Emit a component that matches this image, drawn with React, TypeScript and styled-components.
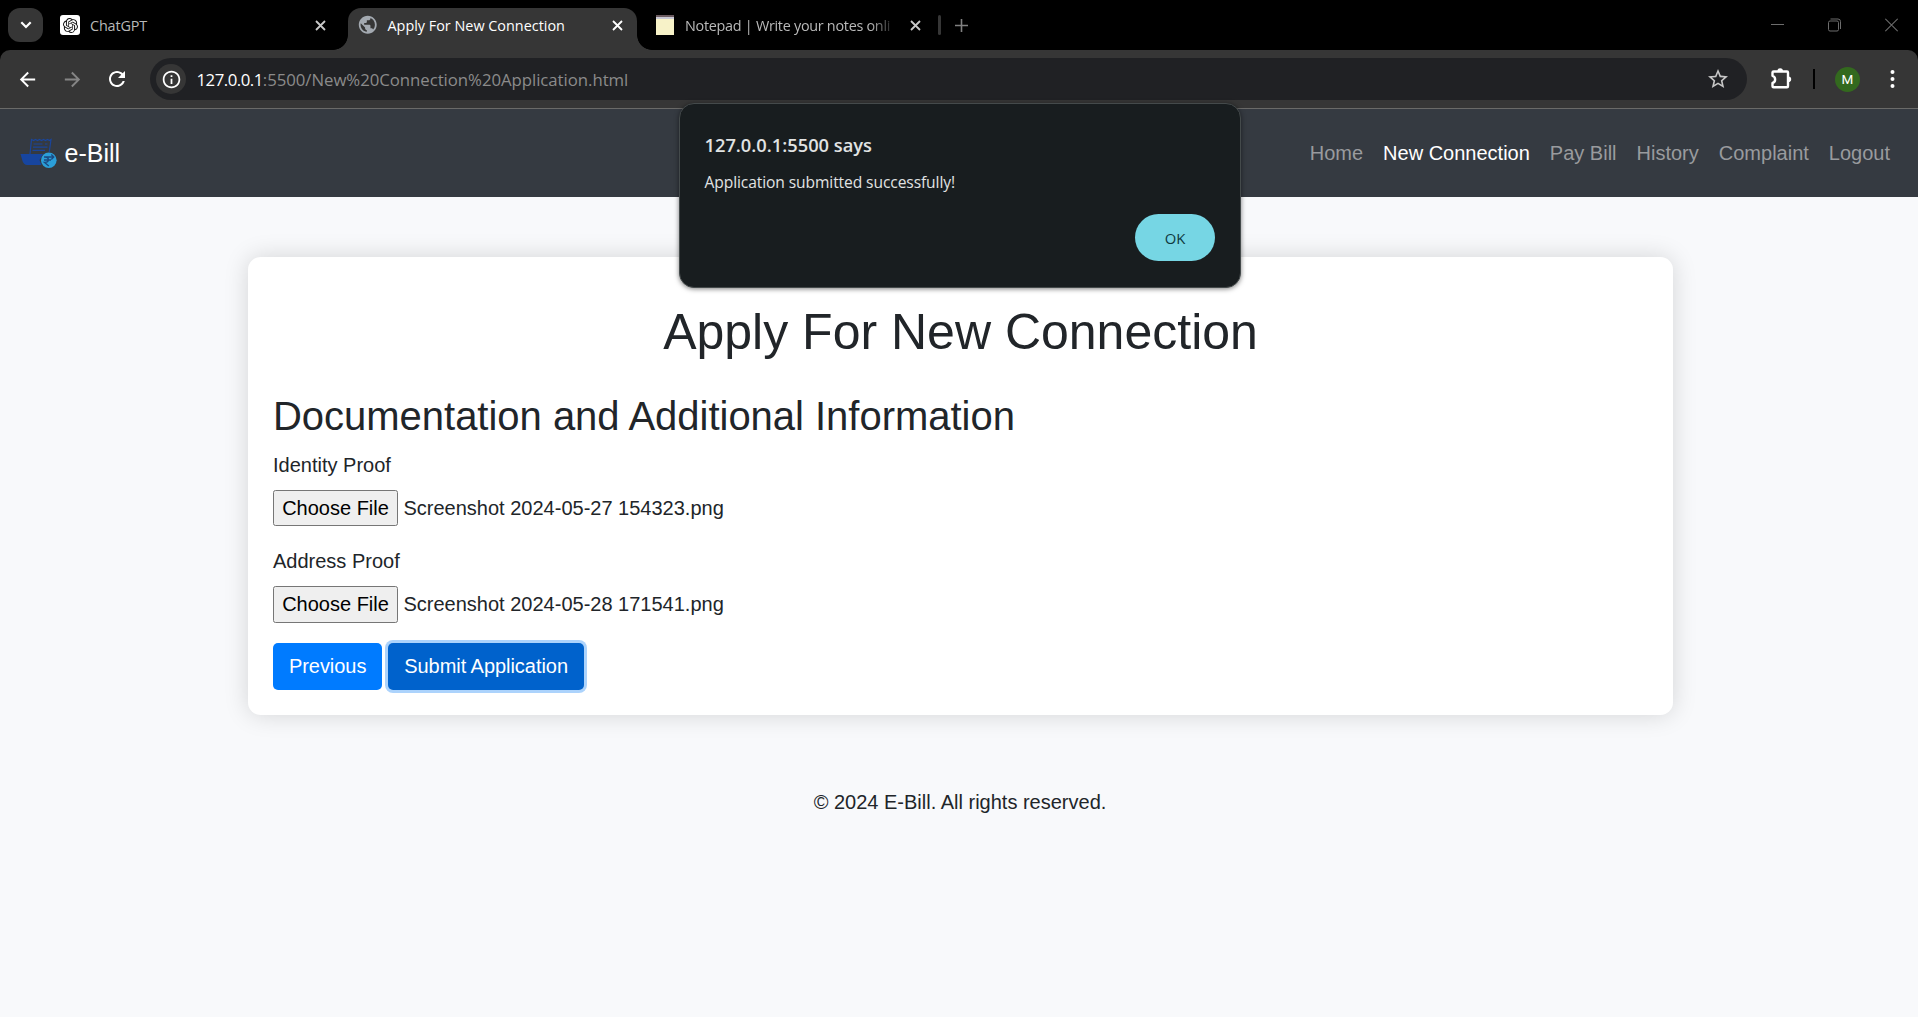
import React from "react";
import styled, { createGlobalStyle, css } from "styled-components";

const GlobalStyle = createGlobalStyle`
  *, *::before, *::after { box-sizing: border-box; }
  html, body { margin: 0; padding: 0; overflow: hidden; }
  body { background: #f8f9fb; color: #212529; }
`;

const uiFont = css`font-family: "Open Sans", "Noto Sans", sans-serif;`;
const pageFont = css`font-family: "Liberation Sans", Arial, sans-serif;`;

/* ---------- Browser frame ---------- */

const Browser = styled.div`
  position: relative;
  display: flex;
  flex-direction: column;
  width: 1918px;
  height: 1017px;
  overflow: hidden;
`;

const Chrome = styled.div`
  background: #000;
  ${uiFont}
`;

const TabStrip = styled.div`
  display: flex;
  align-items: flex-start;
  height: 50px;
  padding: 8px 20px 0 8px;
`;

const TabSearch = styled.div`
  display: flex;
  align-items: center;
  justify-content: center;
  width: 35px;
  height: 34px;
  border-radius: 12px;
  background: #363636;
`;

const Tab = styled.div<{ $width: number; $active?: boolean; $lead: number; $end: number }>`
  position: relative;
  display: flex;
  align-items: center;
  width: ${(p) => p.$width}px;
  height: ${(p) => (p.$active ? 42 : 34)}px;
  padding: 0 ${(p) => p.$end}px ${(p) => (p.$active ? 8 : 0)}px ${(p) => p.$lead}px;
  border-radius: 13px 13px 0 0;
  background: ${(p) => (p.$active ? "#363636" : "transparent")};
  color: ${(p) => (p.$active ? "#fff" : "#b9b9b9")};
  ${(p) =>
    p.$active &&
    css`
      &::before,
      &::after {
        content: "";
        position: absolute;
        bottom: 0;
        width: 15px;
        height: 15px;
      }
      &::before {
        right: 100%;
        background: radial-gradient(circle at 0 0, transparent 14.5px, #363636 15.2px);
      }
      &::after {
        left: 100%;
        background: radial-gradient(circle at 100% 0, transparent 14.5px, #363636 15.2px);
      }
    `}
`;

const TabTitle = styled.span<{ $tracking?: string; $fade?: boolean; $gap: number }>`
  flex: 1;
  min-width: 0;
  margin-left: ${(p) => p.$gap}px;
  padding-top: 1px;
  white-space: nowrap;
  font-size: 14.4px;
  line-height: 22px;
  letter-spacing: ${(p) => p.$tracking ?? "0"};
  ${(p) =>
    p.$fade &&
    css`
      margin-right: 12px;
      mask-image: linear-gradient(to right, #000 185px, transparent 212px);
    `}
`;

const GptBadge = styled.div`
  display: flex;
  align-items: center;
  justify-content: center;
  width: 20px;
  height: 20px;
  border-radius: 3px;
  background: #fff;
  color: #111;
`;

const NotepadIcon = styled.div`
  width: 18px;
  height: 20px;
  background: linear-gradient(#6b5b60 0 2px, #c8c8d4 2px 4px, #f7f2c8 4px);
`;

const StripDivider = styled.div`
  width: 3px;
  height: 20px;
  margin: 7px 14px 0 17px;
  border-radius: 2px;
  background: #363636;
`;

const PlusSlot = styled.div`
  display: flex;
  height: 34px;
  align-items: center;
`;

const WindowControls = styled.div`
  display: flex;
  align-items: center;
  gap: 44px;
  height: 34px;
  margin-left: auto;
  color: #6d6d6d;
`;

const Toolbar = styled.div`
  display: flex;
  align-items: center;
  height: 59px;
  padding: 0 23px 0 16px;
  border-bottom: 1px solid #6a6a68;
  border-radius: 10px 10px 0 0;
  background: #363636;
  color: #fff;
`;

const NavButtons = styled.div`
  display: flex;
  align-items: center;
  gap: 21.5px;
  width: 134px;
`;

const AddressBar = styled.div`
  display: flex;
  align-items: center;
  width: 1597px;
  height: 42px;
  padding: 0 17px 0 6px;
  border-radius: 21px;
  background: #202124;
`;

const InfoCircle = styled.div`
  display: flex;
  align-items: center;
  justify-content: center;
  width: 30px;
  height: 30px;
  margin-right: 10.5px;
  border-radius: 50%;
  background: #363636;
`;

const Host = styled.span`
  font-size: 16.8px;
  letter-spacing: -0.5px;
  color: #fff;
`;

const Path = styled.span`
  flex: 1;
  font-size: 16.8px;
  letter-spacing: -0.05px;
  color: #8b8b8b;
`;

const ToolbarDivider = styled.div`
  width: 2px;
  height: 20px;
  margin: 0 20px 0 20px;
  background: #000;
`;

const Avatar = styled.div`
  display: flex;
  align-items: center;
  justify-content: center;
  width: 25px;
  height: 25px;
  margin-right: auto;
  border-radius: 50%;
  background: #33691e;
  font-family: Roboto, sans-serif;
  font-size: 13.5px;
`;

const ExtensionSlot = styled.div`
  display: flex;
  margin: 0 0 2px 23px;
`;

/* ---------- Alert dialog ---------- */

const Dialog = styled.div`
  position: absolute;
  z-index: 2;
  top: 103px;
  left: 679px;
  display: flex;
  flex-direction: column;
  width: 562px;
  height: 185px;
  padding: 28px 25px 26px 24.5px;
  border: 1px solid #444a4b;
  border-radius: 15px;
  background: #181d1f;
  box-shadow: 0 1px 5px rgba(0, 0, 0, 0.5);
  color: #e1e3e3;
  ${uiFont}
`;

const DialogTitle = styled.div`
  font-size: 18.3px;
  font-weight: 600;
  line-height: 26px;
`;

const DialogMessage = styled.div`
  margin-top: 13px;
  font-size: 15.6px;
  line-height: 22px;
  letter-spacing: -0.1px;
`;

const OkButton = styled.button`
  align-self: flex-end;
  width: 80px;
  height: 47px;
  margin-top: auto;
  padding: 1px 0 0;
  border: 0;
  border-radius: 24px;
  background: #76d6e4;
  color: #0f3a40;
  font-size: 14.8px;
  font-weight: 500;
  ${uiFont}
`;

/* ---------- Web page ---------- */

const Page = styled.div`
  flex: 1;
  background: #f8f9fb;
  font-size: 20px;
  line-height: 30px;
  ${pageFont}
`;

const Navbar = styled.nav`
  display: flex;
  align-items: center;
  justify-content: space-between;
  height: 88px;
  padding: 0 28px 0 19px;
  background: #353a41;
`;

const Brand = styled.div`
  display: flex;
  align-items: center;
  gap: 7.5px;
  color: #fff;
  font-size: 25px;
`;

const NavLinks = styled.div`
  display: flex;
  gap: 20px;
`;

const NavLink = styled.span<{ $active?: boolean }>`
  color: ${(p) => (p.$active ? "#fff" : "#999b9e")};
`;

const Card = styled.main`
  width: 1425px;
  height: 458px;
  margin: 60px 0 0 248px;
  padding: 45px 25px 25px;
  border-radius: 12.5px;
  background: #fff;
  box-shadow: 0 0 25px rgba(0, 0, 0, 0.15);
`;

const Title = styled.h1`
  margin: 0 0 30px;
  text-align: center;
  font-size: 50px;
  font-weight: 400;
  line-height: 60px;
`;

const Subtitle = styled.h2`
  margin: 0 0 10px;
  font-size: 40px;
  font-weight: 400;
  line-height: 48px;
  letter-spacing: -0.02px;
`;

const FormGroup = styled.div`
  display: flex;
  flex-direction: column;
  gap: 10px;
  margin-bottom: 20.2px;
`;

const FileRow = styled.div`
  display: flex;
  align-items: center;
  gap: 5.5px;
  height: 36.2px;
`;

const ChooseFile = styled.button`
  width: 125px;
  height: 100%;
  padding: 0;
  border: 1px solid #767676;
  border-radius: 2.5px;
  background: #efefef;
  color: #000;
  font-size: 20px;
  ${pageFont}
`;

const Actions = styled.div`
  display: flex;
  gap: 6px;
`;

const Button = styled.button<{ $focused?: boolean }>`
  height: 47px;
  padding: 0 15.9px;
  border: 0;
  border-radius: 5px;
  background: ${(p) => (p.$focused ? "#0062cc" : "#007bff")};
  box-shadow: ${(p) => (p.$focused ? "0 0 0 3px #acd3fc" : "none")};
  color: #fff;
  font-size: 20px;
  letter-spacing: -0.04px;
  ${pageFont}
`;

const Footer = styled.footer`
  margin-top: 72px;
  padding-left: 2px;
  text-align: center;
`;

/* ---------- Icons ---------- */

const Glyph = ({ d, size = 24, color = "currentColor" }: { d: string; size?: number; color?: string }) => (
  <svg width={size} height={size} viewBox="0 0 24 24" fill={color}>
    <path d={d} />
  </svg>
);

const paths = {
  back: "M20 11H7.83l5.59-5.59L12 4l-8 8 8 8 1.41-1.41L7.83 13H20v-2z",
  forward: "M12 4l-1.41 1.41L16.17 11H4v2h12.17l-5.58 5.59L12 20l8-8z",
  reload:
    "M17.65 6.35C16.2 4.9 14.21 4 12 4c-4.42 0-7.99 3.58-7.99 8s3.57 8 7.99 8c3.73 0 6.84-2.55 7.73-6h-2.08c-.82 2.33-3.04 4-5.65 4-3.31 0-6-2.69-6-6s2.69-6 6-6c1.66 0 3.14.69 4.22 1.78L13 11h7V4l-2.35 2.35z",
  info: "M11 7h2v2h-2zm0 4h2v6h-2zm1-9C6.48 2 2 6.48 2 12s4.48 10 10 10 10-4.48 10-10S17.52 2 12 2zm0 18c-4.41 0-8-3.59-8-8s3.59-8 8-8 8 3.59 8 8-3.59 8-8 8z",
  star: "M22 9.24l-7.19-.62L12 2 9.19 8.63 2 9.24l5.46 4.73L5.82 21 12 17.27 18.18 21l-1.63-7.03L22 9.24zM12 15.4l-3.76 2.27 1-4.28-3.32-2.88 4.38-.38L12 6.1l1.71 4.04 4.38.38-3.32 2.88 1 4.28L12 15.4z",
  openai:
    "M22.2819 9.8211a5.9847 5.9847 0 0 0-.5157-4.9108 6.0462 6.0462 0 0 0-6.5098-2.9A6.0651 6.0651 0 0 0 4.9807 4.1818a5.9847 5.9847 0 0 0-3.9977 2.9 6.0462 6.0462 0 0 0 .7427 7.0966 5.98 5.98 0 0 0 .511 4.9107 6.051 6.051 0 0 0 6.5146 2.9001A5.9847 5.9847 0 0 0 13.2599 24a6.0557 6.0557 0 0 0 5.7718-4.2058 5.9894 5.9894 0 0 0 3.9977-2.9001 6.0557 6.0557 0 0 0-.7475-7.0729zm-9.022 12.6081a4.4755 4.4755 0 0 1-2.8764-1.0408l.1419-.0804 4.7783-2.7582a.7948.7948 0 0 0 .3927-.6813v-6.7369l2.02 1.1686a.071.071 0 0 1 .038.052v5.5826a4.504 4.504 0 0 1-4.4945 4.4944zm-9.6607-4.1254a4.4708 4.4708 0 0 1-.5346-3.0137l.142.0852 4.783 2.7582a.7712.7712 0 0 0 .7806 0l5.8428-3.3685v2.3324a.0804.0804 0 0 1-.0332.0615L9.74 19.9502a4.4992 4.4992 0 0 1-6.1408-1.6464zM2.3408 7.8956a4.485 4.485 0 0 1 2.3655-1.9728V11.6a.7664.7664 0 0 0 .3879.6765l5.8144 3.3543-2.0201 1.1685a.0757.0757 0 0 1-.071 0l-4.8303-2.7865A4.504 4.504 0 0 1 2.3408 7.872zm16.5963 3.8558L13.1038 8.364 15.1192 7.2a.0757.0757 0 0 1 .071 0l4.8303 2.7913a4.4944 4.4944 0 0 1-.6765 8.1042v-5.6772a.79.79 0 0 0-.407-.667zm2.0107-3.0231l-.142-.0852-4.7735-2.7818a.7759.7759 0 0 0-.7854 0L9.409 9.2297V6.8974a.0662.0662 0 0 1 .0284-.0615l4.8303-2.7866a4.4992 4.4992 0 0 1 6.6802 4.66zM8.3065 12.863l-2.02-1.1638a.0804.0804 0 0 1-.038-.0567V6.0742a4.4992 4.4992 0 0 1 7.3757-3.4537l-.142.0805L8.704 5.459a.7948.7948 0 0 0-.3927.6813zm1.0976-2.3654l2.602-1.4998 2.6069 1.4998v2.9994l-2.5974 1.4997-2.6067-1.4997Z",
  globe:
    "M12 2C6.48 2 2 6.48 2 12s4.48 10 10 10 10-4.48 10-10S17.52 2 12 2zm-1 17.93c-3.95-.49-7-3.85-7-7.93 0-.62.08-1.21.21-1.79L9 15v1c0 1.1.9 2 2 2v1.93zm6.9-2.54c-.26-.81-1-1.39-1.9-1.39h-1v-3c0-.55-.45-1-1-1H8v-2h2c.55 0 1-.45 1-1V7h2c1.1 0 2-.9 2-2v-.41c2.93 1.19 5 4.06 5 7.41 0 2.08-.8 3.97-2.1 5.39z",
};

const CloseIcon = ({ color }: { color: string }) => (
  <svg width="11" height="11" viewBox="0 0 11 11" stroke={color} strokeWidth="1.8">
    <path d="M1 1l9 9M10 1l-9 9" />
  </svg>
);

const PuzzleIcon = () => (
  <svg width="23" height="23" viewBox="0 0 23 23">
    <path
      d="M2.5 5.6q0-1.1 1.1-1.1H17q1 0 1 1V19.300q0 1-1 1H3.600q-1.100 0-1.100-1V16C6 15 6 9.800 2.500 8.800z"
      fill="none"
      stroke="#fff"
      strokeWidth="2.4"
      strokeLinejoin="round"
    />
    <path d="M7.400 4.200a2.800 2.900 0 0 1 5.600 0zM18.300 9.500a2.900 2.800 0 0 1 0 5.600z" fill="#fff" />
  </svg>
);

const BrandLogo = () => (
  <svg width="38" height="32" viewBox="0 0 38 32">
    <path
      d="M11 17L12.500 2.500l2 1 2-1 2 1 2-1 2 1 2-1 2 1 2-1 2 1 1.500-1-1.800 13"
      fill="none"
      stroke="#1a459b"
      strokeWidth="1.200"
    />
    <path d="M14.500 7h9M26 7h2.500M14 10.200h14.500M13.500 13.400h12.500" stroke="#1a459b" strokeWidth="1.200" />
    <path d="M1.500 17h23l-4 6 2 5H8q-3 0-4.500-4z" fill="#17459f" />
    <circle cx="29.800" cy="23.300" r="8.300" fill="#353a41" />
    <circle cx="29.800" cy="23.300" r="7.800" fill="#2b9fd9" />
    <path
      d="M25 20h10M32.300 17.500l2.500 2.500-2.500 2.500M25 23h7M26 20c4.500 0 4.500 5.300 0 5.300h-.6l4.400 3.700"
      fill="none"
      stroke="#1b4a82"
      strokeWidth="1.300"
    />
  </svg>
);

const links = ["Home", "New Connection", "Pay Bill", "History", "Complaint", "Logout"];

const documents = [
  { label: "Identity Proof", file: "Screenshot 2024-05-27 154323.png" },
  { label: "Address Proof", file: "Screenshot 2024-05-28 171541.png" },
];

export default function App() {
  return (
    <Browser>
      <GlobalStyle />
      <Chrome>
        <TabStrip>
          <TabSearch>
            <svg width="12" height="8" viewBox="0 0 12 8" fill="none" stroke="#fff" strokeWidth="2.2">
              <path d="M1.300 1.300L6 6l4.700-4.700" />
            </svg>
          </TabSearch>
          <Tab $width={305} $lead={17} $end={22.5}>
            <GptBadge>
              <Glyph d={paths.openai} size={15} />
            </GptBadge>
            <TabTitle $gap={10} $tracking="-0.15px">ChatGPT</TabTitle>
            <CloseIcon color="#c9c9c9" />
          </Tab>
          <Tab $active $width={289} $lead={9} $end={14}>
            <Glyph d={paths.globe} size={21.5} color="#a3a9b0" />
            <TabTitle $gap={9}>Apply For New Connection</TabTitle>
            <CloseIcon color="#fff" />
          </Tab>
          <Tab $width={284} $lead={19} $end={0.5}>
            <NotepadIcon />
            <TabTitle $gap={11} $tracking="-0.28px" $fade>
              Notepad | Write your notes onli
            </TabTitle>
            <CloseIcon color="#c9c9c9" />
          </Tab>
          <StripDivider />
          <PlusSlot>
            <svg width="13" height="13" viewBox="0 0 13 13" stroke="#808080" strokeWidth="1.6">
              <path d="M6.500 0v13M0 6.500h13" />
            </svg>
          </PlusSlot>
          <WindowControls>
            <svg width="13" height="14" viewBox="0 0 13 14" stroke="currentColor">
              <path d="M0 6.500h13" />
            </svg>
            <svg width="13" height="14" viewBox="0 0 13 14" fill="none" stroke="currentColor">
              <rect x="0.500" y="3" width="10" height="10" rx="1.500" />
              <path d="M2.500 1h7.500q2.500 0 2.500 2.500V11" />
            </svg>
            <svg width="13" height="14" viewBox="0 0 13 14" stroke="currentColor" strokeWidth="1.100">
              <path d="M.3.800l12.400 12.400M12.700.800L.3 13.200" />
            </svg>
          </WindowControls>
        </TabStrip>
        <Toolbar>
          <NavButtons>
            <Glyph d={paths.back} size={23} />
            <Glyph d={paths.forward} size={23} color="#858585" />
            <Glyph d={paths.reload} size={24} />
          </NavButtons>
          <AddressBar>
            <InfoCircle>
              <Glyph d={paths.info} size={21} />
            </InfoCircle>
            <Host>127.0.0.1</Host>
            <Path>:5500/New%20Connection%20Application.html</Path>
            <Glyph d={paths.star} size={24} color="#c7c7c7" />
          </AddressBar>
          <ExtensionSlot>
            <PuzzleIcon />
          </ExtensionSlot>
          <ToolbarDivider />
          <Avatar>M</Avatar>
          <svg width="5" height="20" viewBox="0 0 5 20" fill="#fff">
            <circle cx="2.500" cy="3" r="2" />
            <circle cx="2.500" cy="10" r="2" />
            <circle cx="2.500" cy="17" r="2" />
          </svg>
        </Toolbar>
      </Chrome>
      <Page>
        <Navbar>
          <Brand>
            <BrandLogo />
            <span>e-Bill</span>
          </Brand>
          <NavLinks>
            {links.map((name) => (
              <NavLink key={name} $active={name === "New Connection"}>
                {name}
              </NavLink>
            ))}
          </NavLinks>
        </Navbar>
        <Card>
          <Title>Apply For New Connection</Title>
          <Subtitle>Documentation and Additional Information</Subtitle>
          {documents.map((doc) => (
            <FormGroup key={doc.label}>
              <label>{doc.label}</label>
              <FileRow>
                <ChooseFile>Choose File</ChooseFile>
                <span>{doc.file}</span>
              </FileRow>
            </FormGroup>
          ))}
          <Actions>
            <Button>Previous</Button>
            <Button $focused>Submit Application</Button>
          </Actions>
        </Card>
        <Footer>© 2024 E-Bill. All rights reserved.</Footer>
      </Page>
      <Dialog>
        <DialogTitle>127.0.0.1:5500 says</DialogTitle>
        <DialogMessage>Application submitted successfully!</DialogMessage>
        <OkButton>OK</OkButton>
      </Dialog>
    </Browser>
  );
}
